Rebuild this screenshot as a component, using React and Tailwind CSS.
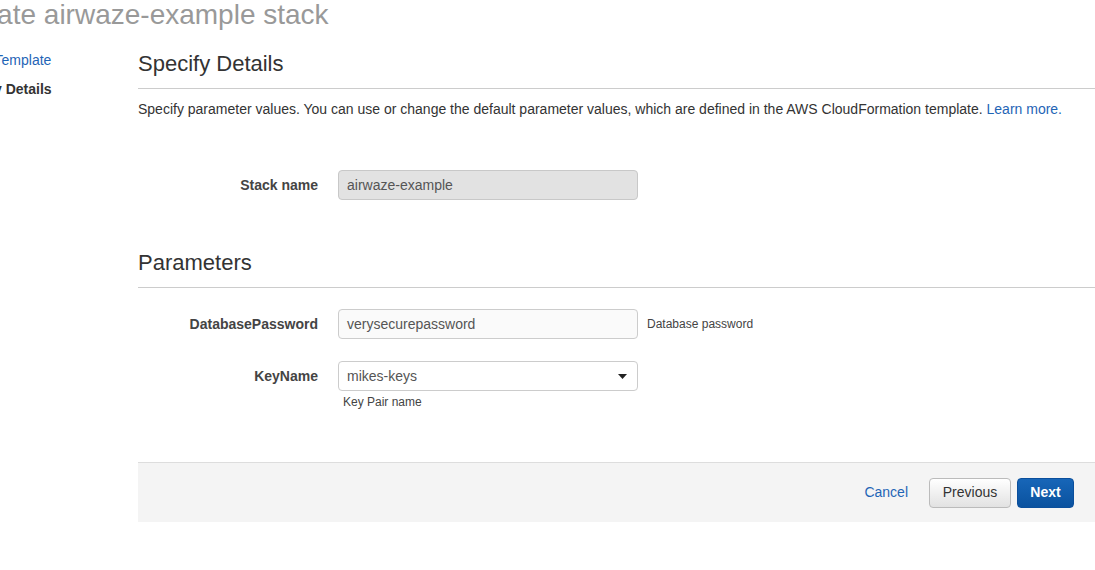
export default function App() {
  const font = { fontFamily: '"Liberation Sans", Arial, sans-serif' };
  return (
    <div className="w-[1095px] h-[570px] overflow-hidden bg-white" style={font}>
      <div className="w-[1143px] -ml-[48px]">
        <h1 className="text-[28px] leading-[30px] text-[#999999] whitespace-nowrap">
          Create airwaze-example stack
        </h1>

        <div className="flex">
          {/* steps sidebar */}
          <div className="w-[186px] shrink-0 pt-[20px] text-[14px] leading-[20px] whitespace-nowrap">
            <div className="text-[#1f65b6]">Select Template</div>
            <div className="mt-[9px] font-bold text-[#333333]">Specify Details</div>
          </div>

          {/* main */}
          <div className="flex-1">
            <h2 className="mt-[21px] text-[22px] leading-[26px] text-[#333333] pb-[11px] border-b border-[#cccccc]">
              Specify Details
            </h2>
            <p className="mt-[11px] text-[14px] leading-[18px] text-[#333333] whitespace-nowrap">
              Specify parameter values. You can use or change the default parameter values, which are defined in the AWS
              CloudFormation template. <span className="text-[#1f65b6]">Learn more.</span>
            </p>

            <div className="mt-[52px] flex items-center gap-5">
              <label className="w-[180px] text-right text-[14px] font-bold text-[#444444]">Stack name</label>
              <div className="w-[300px] h-[30px] flex items-center px-2 rounded-[4px] border border-[#c8c8c8] bg-[#e2e2e2] text-[14px] text-[#555555]">
                airwaze-example
              </div>
            </div>

            <h2 className="mt-[50px] text-[22px] leading-[26px] text-[#333333] pb-[11px] border-b border-[#cccccc]">
              Parameters
            </h2>

            <div className="mt-[21px] flex items-center gap-5">
              <label className="w-[180px] text-right text-[14px] font-bold text-[#444444]">DatabasePassword</label>
              <div className="w-[300px] h-[30px] flex items-center px-2 rounded-[4px] border border-[#cccccc] bg-[#fafafa] text-[14px] text-[#555555]">
                verysecurepassword
              </div>
              <span className="-ml-[11px] text-[12px] text-[#444444]">Database password</span>
            </div>

            <div className="mt-[22px] flex items-center gap-5">
              <label className="w-[180px] text-right text-[14px] font-bold text-[#444444]">KeyName</label>
              <div className="w-[300px] h-[30px] flex items-center justify-between pl-2 pr-[10px] rounded-[4px] border border-[#cccccc] bg-white text-[14px] text-[#555555]">
                <span>mikes-keys</span>
                <svg width="9" height="5" viewBox="0 0 9 5">
                  <path d="M0 0h9L4.5 5z" fill="#222222" />
                </svg>
              </div>
            </div>
            <div className="mt-[4px] pl-[205px] text-[12px] leading-[14px] text-[#444444]">Key Pair name</div>

            <div className="mt-[53px] h-[60px] border-t border-[#dddddd] bg-[#f4f4f4] flex items-center justify-end pr-[21px] gap-[6px]">
              <span className="mr-[15px] text-[14px] text-[#1f65b6]">Cancel</span>
              <button className="w-[82px] h-[30px] rounded-[4px] border border-[#bbbbbb] bg-gradient-to-b from-white to-[#e2e2e2] text-[14px] text-[#333333]">
                Previous
              </button>
              <button className="w-[57px] h-[30px] rounded-[4px] border border-[#0b4f9c] bg-gradient-to-b from-[#1766b8] to-[#0a529f] text-[14px] font-bold text-white">
                Next
              </button>
            </div>
          </div>
        </div>
      </div>
    </div>
  );
}
